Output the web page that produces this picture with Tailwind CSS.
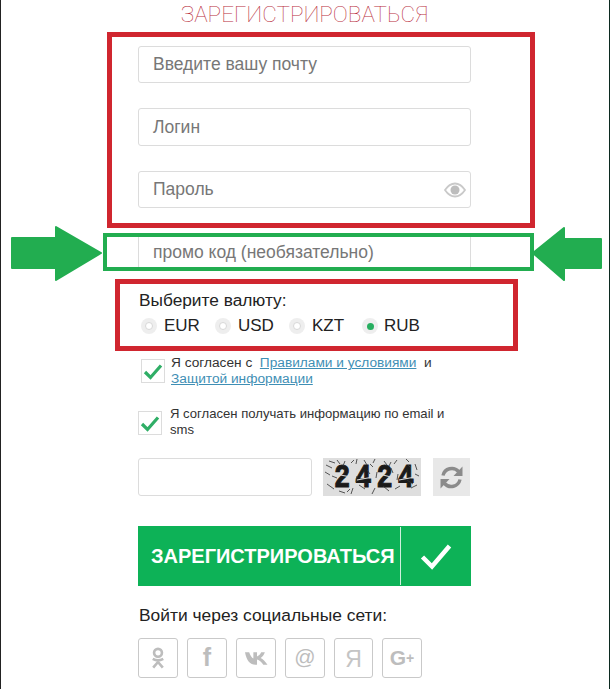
<!DOCTYPE html>
<html lang="ru">
<head>
<meta charset="utf-8">
<title>Регистрация</title>
<script src="https://cdn.jsdelivr.net/npm/@tailwindcss/browser@4"></script>
</head>
<body class="bg-white">
<div class="relative w-[610px] h-[689px] overflow-hidden bg-white border-x border-l-[#222] border-r-[#0c2a20] font-['Liberation_Sans',Arial,sans-serif]">

  <!-- form column -->
  <div class="w-[333px] ml-[137px]">
    <h1 class="h-[46px] pt-[1px] text-center text-[22.5px] leading-[26px] font-thin text-[#b92f40] font-['Roboto',sans-serif]">ЗАРЕГИСТРИРОВАТЬСЯ</h1>

    <div class="flex h-[37px] items-center rounded-[3px] border border-[#dcdcdc] pl-[14px] text-[17.5px] text-[#777]">Введите вашу почту</div>
    <div class="mt-[25px] flex h-[38px] items-center rounded-[3px] border border-[#dcdcdc] pl-[14px] text-[17.5px] text-[#777]">Логин</div>
    <div class="mt-[25px] flex h-[37px] items-center justify-between rounded-[3px] border border-[#dcdcdc] pl-[14px] pr-[4px] text-[17.5px] text-[#777]">
      Пароль
      <svg class="w-[22px] h-[16px]" viewBox="0 0 22 16"><path d="M1 8C4 3.500 7.500 1.500 11 1.500S18 3.500 21 8C18 12.500 14.500 14.500 11 14.500S4 12.500 1 8Z" fill="none" stroke="#c9c9c9" stroke-width="1.800"/><circle cx="11" cy="8" r="4.500" fill="#bdbdbd"/></svg>
    </div>
    <div class="mt-[25px] flex h-[38px] items-center rounded-[3px] border-x border-[#dcdcdc] pl-[14px] text-[17.5px] text-[#777]">промо код (необязательно)</div>

    <div class="mt-[19px] pl-[1px] text-[17.3px] leading-[20px] text-[#222]">Выберите валюту:</div>
    <div class="mt-[7px] flex h-[18px] items-center pl-[3px] text-[17px] text-[#222]">
      <span class="flex h-[16px] w-[16px] items-center justify-center rounded-full bg-[#eeeeee]"><span class="h-[8px] w-[8px] rounded-full border border-[#d8d8d8] bg-white"></span></span>
      <span class="ml-[7px] w-[51px]">EUR</span>
      <span class="flex h-[16px] w-[16px] items-center justify-center rounded-full bg-[#eeeeee]"><span class="h-[8px] w-[8px] rounded-full border border-[#d8d8d8] bg-white"></span></span>
      <span class="ml-[7px] w-[51px]">USD</span>
      <span class="flex h-[16px] w-[16px] items-center justify-center rounded-full bg-[#eeeeee]"><span class="h-[8px] w-[8px] rounded-full border border-[#d8d8d8] bg-white"></span></span>
      <span class="ml-[7px] w-[50px]">KZT</span>
      <span class="flex h-[16px] w-[16px] items-center justify-center rounded-full bg-[#eeeeee]"><span class="h-[7px] w-[7px] rounded-full bg-[#27ae60]"></span></span>
      <span class="ml-[6px]">RUB</span>
    </div>

    <div class="mt-[20px] flex pl-[3px]">
      <span class="mt-[4px] flex h-[24px] w-[24px] shrink-0 items-center justify-center border border-[#dcdcdc]">
        <svg class="w-[20px] h-[17px]" viewBox="0 0 20 17"><path d="M2 9L7.500 14.500L18 2.500" fill="none" stroke="#2fae66" stroke-width="3.200"/></svg>
      </span>
      <p class="ml-[6px] text-[13.7px] leading-[16px] text-[#333]">Я согласен с &nbsp;<a class="text-[#3f8fb5] underline">Правилами и условиями</a> &nbsp;и<br><a class="text-[#3f8fb5] underline">Защитой информации</a></p>
    </div>

    <div class="mt-[19px] flex">
      <span class="mt-[5px] flex h-[24px] w-[24px] shrink-0 items-center justify-center border border-[#dcdcdc]">
        <svg class="w-[20px] h-[17px]" viewBox="0 0 20 17"><path d="M2 9L7.500 14.500L18 2.500" fill="none" stroke="#2fae66" stroke-width="3.200"/></svg>
      </span>
      <p class="ml-[8px] text-[13.1px] leading-[16px] text-[#333]">Я согласен получать информацию по email и<br>sms</p>
    </div>

    <div class="mt-[20px] flex h-[38px]">
      <div class="w-[174px] rounded-[3px] border border-[#dcdcdc]"></div>
      <svg class="ml-[11px] w-[98px] h-[38px] bg-[#dedede]" viewBox="0 0 98 38">
        <text x="11" y="24.500" transform="scale(1 1.2)" textLength="80" lengthAdjust="spacing" fill="#1a1a1a" stroke="#1a1a1a" stroke-width=".9" font-size="27" font-weight="700" font-family="'Liberation Mono',monospace">2424</text>
        <g stroke="#dedede" stroke-width="1" fill="none">
          <path d="M12 16L28 19M34 22L50 19M56 16L72 20M76 22L92 19"/>
        </g>
        <g stroke="#333" stroke-width="1" fill="none" opacity=".8">
          <path d="M3 7L9 10M6 3L12 5M14 2L17 6M22 3L20 8M28 5L31 2M34 1L33 6M41 2L44 7M47 6L50 9M52 1L50 5M61 3L64 7M66 8L68 4M74 2L71 6M83 1L86 4M92 6L94 12M88 10L85 7"/>
          <path d="M4 26L11 31M2 14L7 17M9 18L14 20M30 30L28 36M34 18L33 24M36 27L42 31M52 30L49 36M54 14L53 20M60 28L66 33M72 31L77 28M75 16L74 22M84 22L90 26M88 30L94 27M16 33L22 35M44 12L47 16M68 10L70 15M24 34L27 31M92 16L96 18"/>
        </g>
      </svg>
      <div class="ml-[12px] flex w-[37px] items-center justify-center bg-[#e8e8e8]">
        <svg class="w-[27px] h-[25px]" viewBox="0 0 27 25" fill="none"><path d="M5 10.500A9 9 0 0 1 20.500 6.500" stroke="#8b8b8b" stroke-width="3.400"/><path d="M24.500 1.500V11H15.500Z" fill="#8b8b8b"/><path d="M22 14.500A9 9 0 0 1 6.500 18.500" stroke="#8b8b8b" stroke-width="3.400"/><path d="M2.500 23.500V14H11.500Z" fill="#8b8b8b"/></svg>
      </div>
    </div>

    <div class="mt-[30px] flex h-[60px] items-center bg-[#0db257] text-white">
      <span class="w-[262px] pl-[13px] text-[20px] font-bold whitespace-nowrap">ЗАРЕГИСТРИРОВАТЬСЯ</span>
      <span class="h-[58px] w-px bg-white/80"></span>
      <span class="flex flex-1 justify-center">
        <svg class="w-[32px] h-[27px]" viewBox="0 0 32 27"><path d="M2.500 14L12 23.500L29.500 3" fill="none" stroke="#fff" stroke-width="4.500"/></svg>
      </span>
    </div>

    <div class="mt-[19px] pl-[1px] text-[17.4px] leading-[20px] text-[#222]">Войти через социальные сети:</div>

    <div class="mt-[13px] flex gap-[9px]">
      <span class="flex h-[40px] w-[40px] items-center justify-center rounded-[3px] border border-[#c9c9c9]">
        <svg class="w-[14px] h-[25px]" viewBox="0 0 16 26" fill="none" stroke="#bdbdbd" stroke-width="3"><circle cx="8" cy="6.500" r="4.500"/><path d="M2 13.500C5.500 15.500 10.500 15.500 14 13.500M8 15.500V17M8 17L2.500 23.500M8 17L13.500 23.500"/></svg>
      </span>
      <span class="flex h-[40px] w-[40px] items-center justify-center rounded-[3px] border border-[#c9c9c9] text-[25px] font-bold text-[#bdbdbd]">f</span>
      <span class="flex h-[40px] w-[40px] items-center justify-center rounded-[3px] border border-[#c9c9c9]">
        <svg class="w-[23px] h-[14px]" viewBox="0 0 22 13" fill="#bdbdbd"><path d="M0 1H4C5 4 6.500 6.500 8 7V1H11.500V5C13 4.500 14.500 3 15.500 1H19C18.300 3.500 16.500 5.500 15 6.500C17 7.500 19.500 10 21.500 13H17.500C16 10.500 14 8.700 11.500 8V13H10C5 13 1.500 9 0 1Z"/></svg>
      </span>
      <span class="flex h-[40px] w-[40px] items-center justify-center rounded-[3px] border border-[#c9c9c9] pb-[2px] text-[21px] text-[#bdbdbd]">@</span>
      <span class="flex h-[40px] w-[39px] items-center justify-center rounded-[3px] border border-[#c9c9c9] pt-[2px] text-[23px] text-[#c4c4c4]">Я</span>
      <span class="flex h-[40px] w-[40px] items-center justify-center rounded-[3px] border border-[#c9c9c9] text-[21px] font-bold text-[#bdbdbd]">G<span class="text-[14px]">+</span></span>
    </div>
  </div>

  <!-- red and green markup drawn over the screenshot -->
  <div class="absolute left-[106px] top-[32px] h-[196px] w-[428px] border-[5px] border-[#d0262f]"></div>
  <div class="absolute left-[102px] top-[233px] h-[38px] w-[431px] border-[4px] border-[#22ad50]"></div>
  <div class="absolute left-[114px] top-[279px] h-[72px] w-[403px] border-[5px] border-[#d0262f]"></div>

  <svg class="absolute left-[9px] top-[225px] w-[93px] h-[56px]" viewBox="0 0 93 56"><path d="M2 13H46V2L91 28L46 55V43H2Z" fill="#22ad50" stroke="#22ad50" stroke-width="2" stroke-linejoin="round"/></svg>
  <svg class="absolute left-[530px] top-[225px] w-[72px] h-[56px]" viewBox="0 0 72 56"><path d="M70 14H33V3L2 28L33 55V43H70Z" fill="#22ad50" stroke="#22ad50" stroke-width="2" stroke-linejoin="round"/></svg>
</div>
</body>
</html>
